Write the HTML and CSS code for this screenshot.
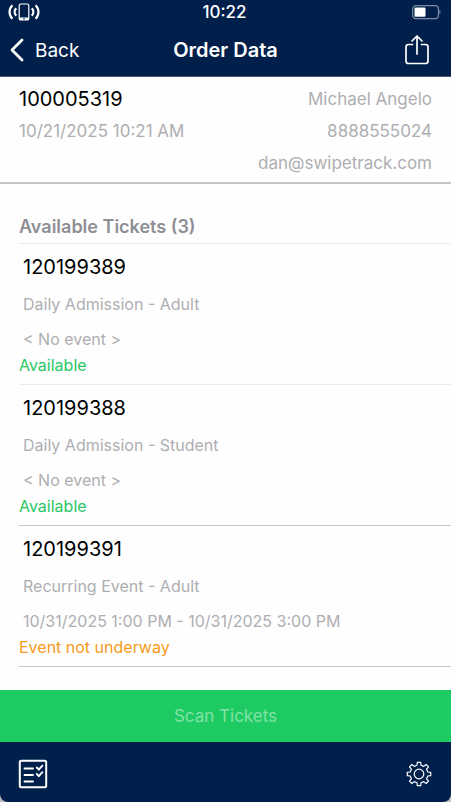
FILE: index.html
```html
<!DOCTYPE html>
<html lang="en">
<head>
<meta charset="utf-8">
<meta name="viewport" content="width=device-width, initial-scale=1">
<title>Order Data</title>
<link rel="stylesheet" href="styles.css">
</head>
<body>
<div class="app">
  <header class="top">
    <div class="status-bar">
      <svg class="signal" width="32" height="18" viewBox="0 0 32 18" fill="none" stroke="#fff" aria-hidden="true">
        <rect x="11.200" y="1" width="9.600" height="16" rx="1.600" stroke-width="1.200"/>
        <path d="M11.200 14.500h9.600v2.500h-9.600z" fill="#fff" stroke="none"/>
        <circle cx="16" cy="15.700" r=".8" fill="#00204b" stroke="none"/>
        <path d="M4.400 2.200C.6 6 .6 12 4.400 15.800M27.600 2.200c3.800 3.800 3.800 9.800 0 13.600M8.200 5.200c-2 2.200-2 5.400 0 7.600M23.800 5.200c2 2.200 2 5.400 0 7.600" stroke-width="2.200"/>
      </svg>
      <span class="clock">10:22</span>
      <svg class="battery" width="30" height="16" viewBox="0 0 30 16" aria-hidden="true">
        <rect x="1.600" y="1.600" width="25.800" height="13" rx="3.400" fill="none" stroke="#7d8ca5" stroke-width="1.200"/>
        <rect x="3.500" y="3.500" width="11" height="9.300" rx="1" fill="#fff"/>
        <path d="M28.400 6c1.500.5 1.500 3.700 0 4.200z" fill="#7d8ca5"/>
      </svg>
    </div>
    <nav class="nav-bar">
      <a class="back" href="#">
        <svg width="16" height="24" viewBox="0 0 16 24" fill="none" stroke="#fff" stroke-width="2.800" stroke-linecap="round" stroke-linejoin="round" aria-hidden="true"><path d="M13 2 3 12l10 10"/></svg>
        <span>Back</span>
      </a>
      <h1 class="title">Order Data</h1>
      <button class="icon-button share" type="button" aria-label="Share">
        <svg width="26" height="32" viewBox="0 0 26 32" fill="none" stroke="#fff" stroke-width="1.700" stroke-linecap="round" stroke-linejoin="round"><path d="M8.500 10.500H4.500a2.500 2.500 0 0 0-2.500 2.500v14a2.500 2.500 0 0 0 2.500 2.500h17a2.500 2.500 0 0 0 2.500-2.500V13a2.500 2.500 0 0 0-2.500-2.500h-4M13 20V2.200M8 7l5-5 5 5"/></svg>
      </button>
    </nav>
  </header>

  <main class="content">
    <section class="order" aria-label="Order">
      <div class="order-info">
        <p class="number">100005319</p>
        <p>10/21/2025 10:21 AM</p>
      </div>
      <div class="customer">
        <p>Michael Angelo</p>
        <p>8888555024</p>
        <p>dan@swipetrack.com</p>
      </div>
    </section>

    <section class="tickets">
      <h2 class="list-title">Available Tickets (3)</h2>
      <ul class="ticket-list">
        <li class="ticket">
          <p class="number">120199389</p>
          <p class="detail">Daily Admission - Adult</p>
          <p class="detail">&lt; No event &gt;</p>
          <p class="state available">Available</p>
        </li>
        <li class="ticket">
          <p class="number">120199388</p>
          <p class="detail">Daily Admission - Student</p>
          <p class="detail">&lt; No event &gt;</p>
          <p class="state available">Available</p>
        </li>
        <li class="ticket">
          <p class="number">120199391</p>
          <p class="detail">Recurring Event - Adult</p>
          <p class="detail">10/31/2025 1:00 PM - 10/31/2025 3:00 PM</p>
          <p class="state pending">Event not underway</p>
        </li>
      </ul>
    </section>
  </main>

  <button class="scan" type="button" disabled>Scan Tickets</button>

  <footer class="bottom-frame">
    <div class="toolbar">
      <button class="icon-button" type="button" aria-label="Order list">
        <svg width="30" height="30" viewBox="0 0 30 30" fill="none" stroke="#fff" stroke-linecap="round" stroke-linejoin="round"><rect x="1.800" y="1.800" width="26.400" height="26.400" rx="1.500" stroke-width="2"/><path d="M6.500 9.500h8.500M6.500 16h8.500M6.500 22.500h8.500M18.800 8.500l2 2.200 3.600-4M18.800 15l2 2.200 3.600-4" stroke-width="1.900"/></svg>
      </button>
      <button class="icon-button" type="button" aria-label="Settings">
        <svg width="26" height="26" viewBox="0 0 26 26" fill="none" stroke="#fff" stroke-width="1.200" stroke-linejoin="round"><path d="M11 4.200 11.300 1.300h3.400L15 4.200l2.800 1.200 2.300-1.900 2.400 2.400-1.900 2.300L21.800 11l2.900.3v3.400l-2.900.3-1.200 2.800 1.900 2.300-2.400 2.400-2.300-1.900L15 21.800l-.3 2.900h-3.400L11 21.800l-2.800-1.200-2.300 1.900-2.400-2.400 1.900-2.300L4.200 15l-2.900-.3v-3.400l2.900-.3 1.200-2.800-1.900-2.300 2.400-2.400 2.300 1.900z"/><circle cx="13" cy="13" r="4.800"/></svg>
      </button>
    </div>
  </footer>
</div>
</body>
</html>
```
FILE: styles.css
```css
* {
  box-sizing: border-box;
}

body {
  margin: 0;
  background: #fefefe;
  color: #000;
  font-family: Inter, "Liberation Sans", sans-serif;
  font-size: 16px;
}

h1, h2, p, ul {
  margin: 0;
  padding: 0;
}

.app {
  display: flex;
  flex-direction: column;
  min-height: 100vh;
}

.top {
  background: #00204b;
  color: #fff;
  border-bottom: 1px solid #4a5872;
}

.status-bar,
.nav-bar {
  display: grid;
  grid-template-columns: 1fr auto 1fr;
  align-items: center;
}

.status-bar {
  height: 24px;
  padding: 0 10px 0 8px;
}

.clock {
  font-size: 17px;
  font-weight: 500;
}

.battery,
.share {
  justify-self: end;
}

.nav-bar {
  height: 52px;
  padding: 0 21px 0 9px;
}

.back {
  display: flex;
  align-items: center;
  gap: 10px;
  color: #fff;
  font-size: 19px;
  text-decoration: none;
}

.title {
  padding-left: 12px;
  font-size: 20px;
  font-weight: 600;
}

.icon-button {
  display: flex;
  padding: 0;
  border: 0;
  background: none;
}

.content {
  flex: 1;
}

.order {
  display: flex;
  justify-content: space-between;
  padding: 6px 19px 3px;
  border-bottom: 2px solid #c4c4c6;
  color: #aeaeb2;
  font-size: 17px;
  line-height: 32px;
}

.customer {
  text-align: right;
}

.number {
  color: #000;
  font-size: 20px;
}

.tickets {
  padding: 26px 0 23px 19px;
}

.list-title {
  color: #8e8e93;
  font-size: 18px;
  font-weight: 600;
  line-height: 33px;
}

.ticket-list {
  list-style: none;
  border-top: 1px solid #ececee;
}

.ticket {
  padding: 3px 0 11px;
  border-bottom: 1px solid #ececee;
}

.ticket:nth-child(n + 2) {
  border-bottom-color: #c6c6c8;
}

.ticket .number {
  padding-left: 4px;
  line-height: 40px;
}

.detail {
  padding-left: 4px;
  color: #aeaeb2;
  line-height: 35px;
}

.state {
  line-height: 16px;
}

.available {
  color: #2ac765;
}

.pending {
  color: #f79a20;
}

.scan {
  height: 52px;
  border: 0;
  background: #1ecb63;
  color: #83e1a5;
  font-family: inherit;
  font-size: 17px;
}

.bottom-frame {
  background: #b9bcc1;
}

.toolbar {
  display: flex;
  align-items: center;
  justify-content: space-between;
  height: 60px;
  padding: 4px 19px 0 18px;
  border-radius: 0 0 8px 8px;
  background: #00204b;
}
```
